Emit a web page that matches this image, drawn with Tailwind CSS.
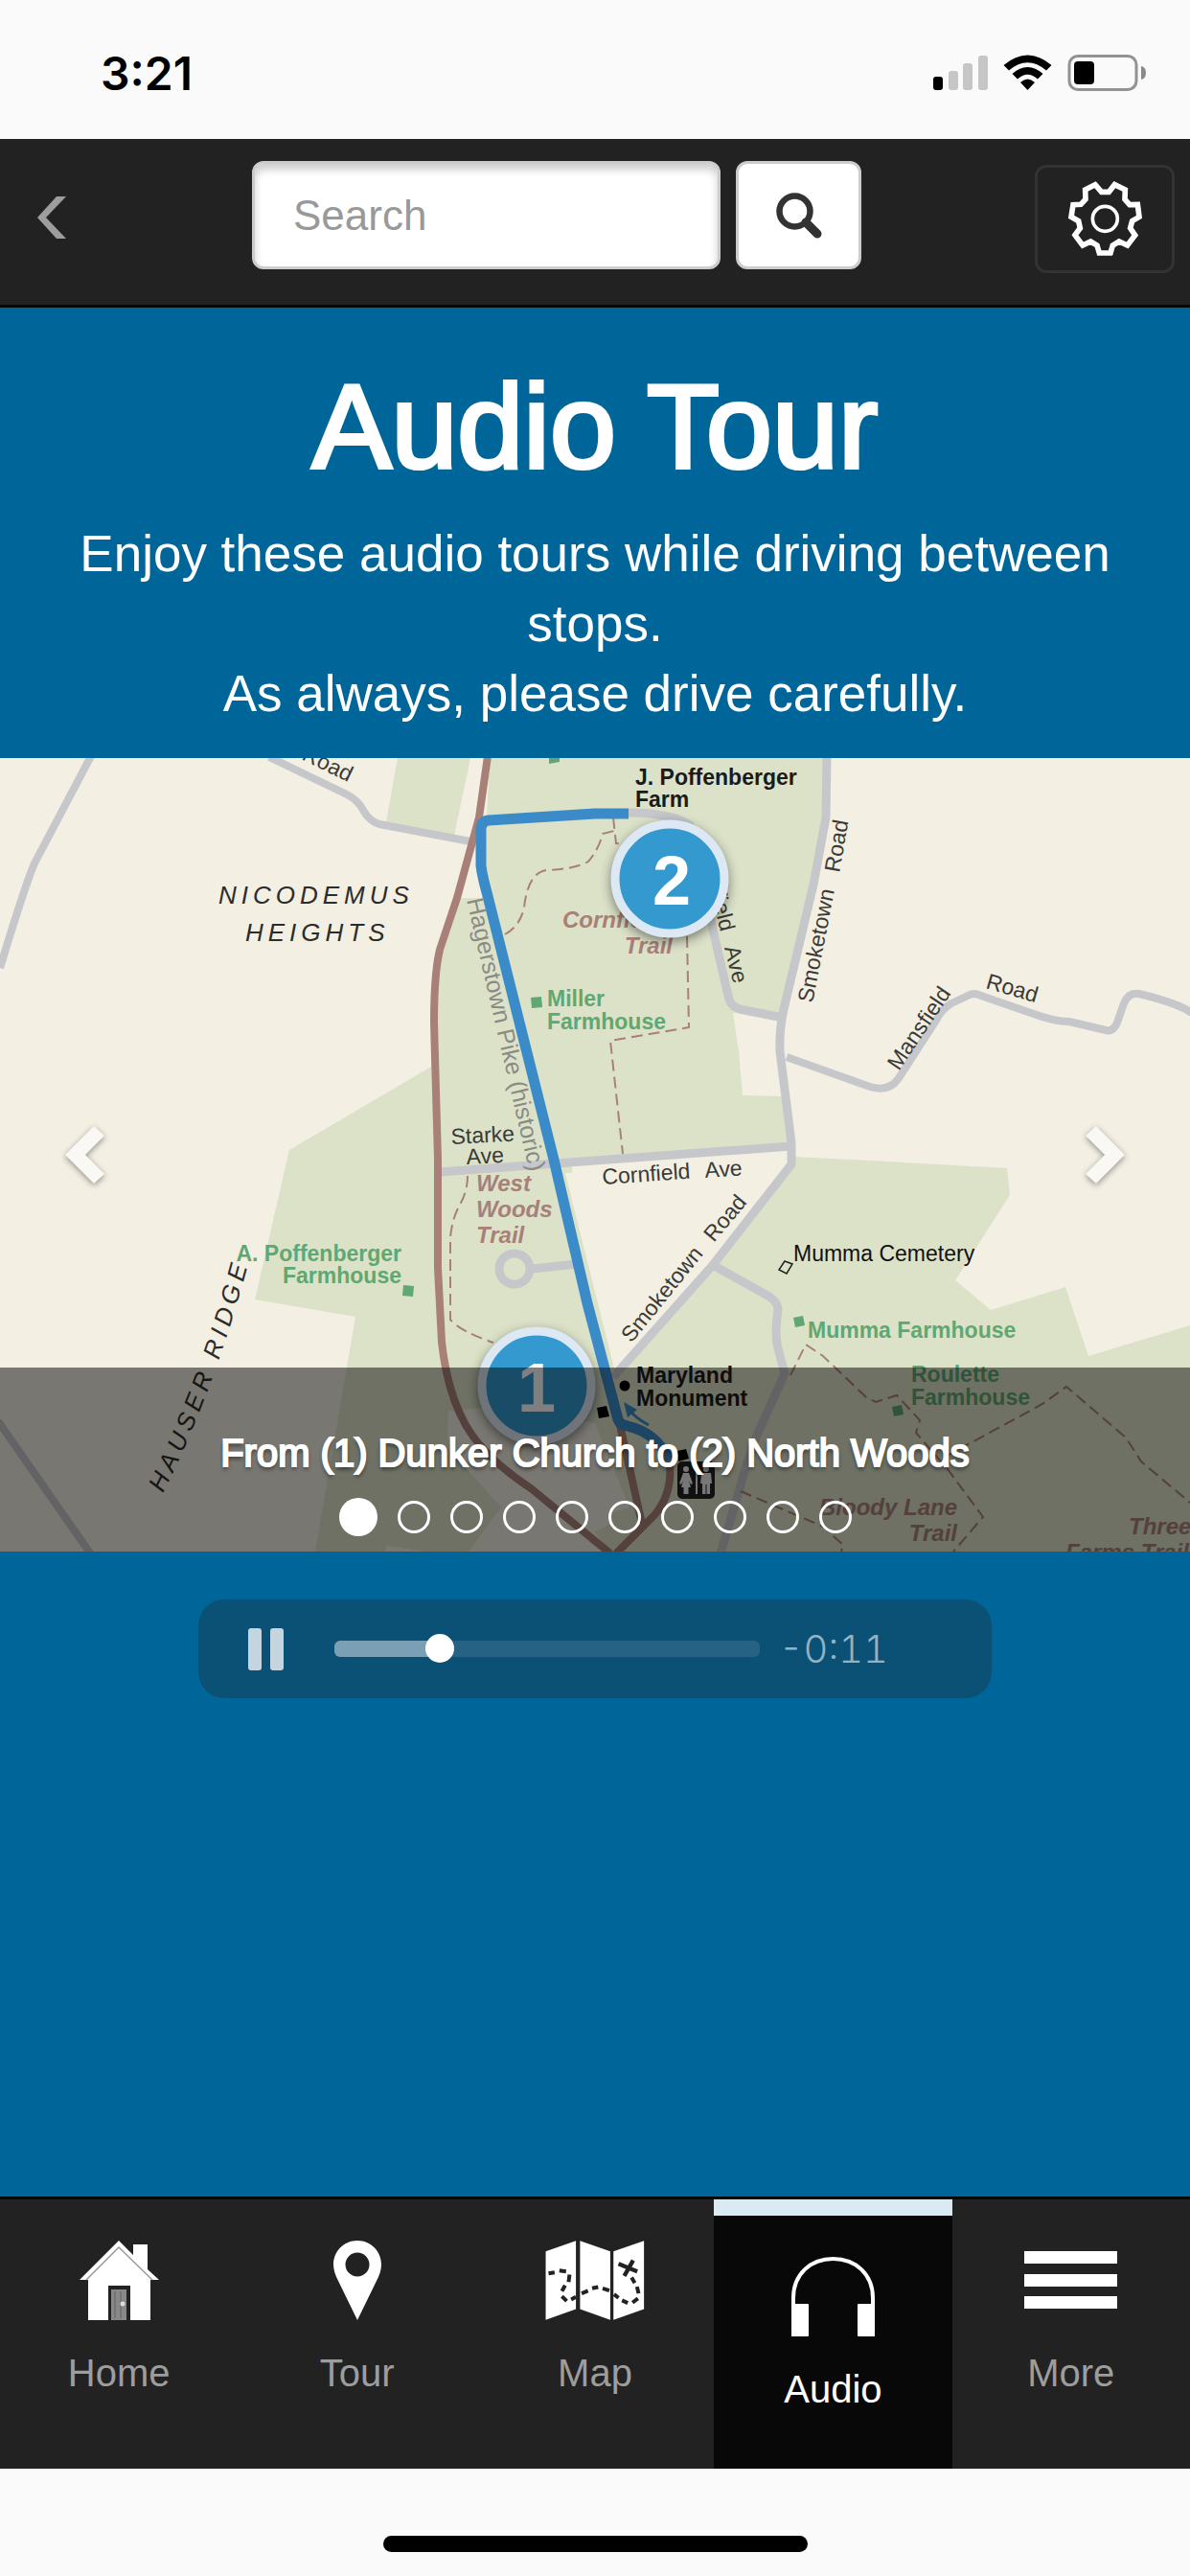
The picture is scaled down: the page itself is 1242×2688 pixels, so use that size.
<!DOCTYPE html>
<html lang="en">
<head>
    <meta charset="UTF-8">
    <meta name="viewport" content="width=device-width, initial-scale=1.0">
    <title>Audio Tour</title>
    <script src="https://cdn.jsdelivr.net/npm/@tailwindcss/browser@4"></script>
    <style>
        body {
            font-family: "Liberation Sans", Arial, sans-serif;
        }
        .seek {
            appearance: none;
            height: 30px;
            background: transparent;
        }
        .seek::-webkit-slider-runnable-track {
            height: 17px;
            border-radius: 6px;
            background: linear-gradient(to right, #7ba0b6 25%, #256283 25%);
        }
        .seek::-webkit-slider-thumb {
            appearance: none;
            width: 30px;
            height: 30px;
            margin-top: -7px;
            border-radius: 50%;
            background: #fff;
        }
        .road { fill: none; stroke: #c6c7ca; stroke-linejoin: round; }
        .pike { fill: none; stroke: #a88078; stroke-width: 8; stroke-linejoin: round; }
        .route { fill: none; stroke: #3a8bc8; stroke-width: 11; stroke-linejoin: round; }
        .trail { fill: none; stroke: #a88078; stroke-width: 2; stroke-dasharray: 12 6; }
        .area { fill: #dce2c8; }
        .field { fill: #f3efe3; }
        .road-name { font-size: 23px; fill: #3a3a38; }
        .place { font-size: 23px; font-weight: 700; }
        .trail-name { font-size: 24px; font-weight: 700; font-style: italic; fill: #a88078; }
        .region { font-size: 26px; font-style: italic; letter-spacing: 5px; fill: #2c2c2a; }
        .pin { filter: drop-shadow(0 4px 6px rgb(0 0 0 / 0.45)); }
    </style>
</head>
<body class="min-h-screen flex flex-col bg-[#fafafa]">

    <!-- Status bar -->
    <div class="h-[145px] flex items-center justify-between pt-2 pl-[105px] pr-[45px]">
        <span class="text-[48px] leading-[56px] font-semibold text-black font-[Inter,sans-serif]">3:21</span>
        <svg class="w-[223px] h-[40px]" viewBox="0 0 223 40" aria-hidden="true">
            <rect x="0" y="23" width="10" height="14" rx="3" fill="#000"/>
            <rect x="16" y="17" width="10" height="20" rx="3" fill="#c6c6c6"/>
            <rect x="31" y="9" width="10" height="28" rx="3" fill="#c6c6c6"/>
            <rect x="47" y="1" width="10" height="36" rx="3" fill="#c6c6c6"/>
            <path d="M73.500 11 Q98.500 -10 123.500 11 L118 16.500 Q98.500 0 79 16.500 Z" fill="#000"/>
            <path d="M82.500 20 Q98.500 6 114.500 20 L109 25.500 Q98.500 16 88 25.500 Z" fill="#000"/>
            <path d="M91 29 Q98.500 22 106 29 L98.500 37 Z" fill="#000"/>
            <rect x="142" y="1.500" width="70" height="35" rx="9" fill="none" stroke="#929292" stroke-width="3"/>
            <rect x="147" y="7" width="21" height="24" rx="4" fill="#000"/>
            <path d="M217 12 q5 1 5 7 q0 6 -5 7 z" fill="#8a8a8a"/>
        </svg>
    </div>

    <!-- Header -->
    <header class="bg-[#222] border-b-[3px] border-[#080808] pt-[23px] pb-[33px] pr-4">
        <div class="flex items-center h-[117px]">
            <a href="#back" aria-label="Back" class="w-[263px] pl-[38px]">
                <svg class="w-8 h-11" viewBox="0 0 32 44" aria-hidden="true">
                    <path d="M21 0 H31 L10 22 L31 44 H21 L1 22 Z" fill="#9d9d9d"/>
                </svg>
            </a>
            <form class="flex gap-4 self-start" onsubmit="return false">
                <input id="search" type="text" aria-label="Search" placeholder="Search" class="w-[489px] h-[113px] min-w-0 rounded-xl border-3 border-[#ccc] bg-white px-10 text-[44px] text-[#555] placeholder:text-[#999] shadow-[inset_0_6px_9px_rgba(0,0,0,0.2)]">
                <button type="submit" aria-label="Search" class="w-[131px] h-[113px] rounded-xl border-3 border-[#ccc] bg-white flex items-center justify-center">
                    <svg class="w-12 h-12" viewBox="0 0 48 48" aria-hidden="true">
                        <circle cx="19.500" cy="19.500" r="16" fill="none" stroke="#333" stroke-width="6.500"/>
                        <path d="M31 31 L43 43" stroke="#333" stroke-width="9" stroke-linecap="round"/>
                    </svg>
                </button>
            </form>
            <button type="button" aria-label="Settings" class="self-end ml-auto w-[146px] h-[113px] rounded-xl border-3 border-[#333] flex items-center justify-center">
                <svg class="w-[79px] h-[79px]" viewBox="525 453 237 237" fill="none" stroke="#fff" aria-hidden="true">
                    <path d="M612 464 L632 487 H655 L673 464 L706 480 L705 510 L720 527 L745 526 L750 565 L728 578 L722 600 L737 622 L713 654 L687 642 L667 654 L660 678 H625 L618 654 L598 642 L573 654 L549 622 L565 600 L560 578 L537 565 L543 527 L567 526 L582 510 L581 480 Z" stroke-width="17"/>
                    <circle cx="643" cy="571" r="39" stroke-width="11"/>
                </svg>
            </button>
        </div>
    </header>

    <main class="flex-1 bg-[#069] text-white text-center">
        <div class="px-16 pt-14 pb-[31px]">
            <h1 class="text-[124px] leading-[136px] [-webkit-text-stroke:4px_white]">Audio Tour</h1>
            <p class="mt-7 text-[53px] leading-[73px]">Enjoy these audio tours while driving between stops.<br>As always, please drive carefully.</p>
        </div>

        <!-- Map carousel -->
        <section class="relative overflow-hidden" aria-label="Audio tours">
            <svg class="block w-full h-auto bg-[#f3efe3]" viewBox="0 0 1242 828" role="img" aria-label="Map from Dunker Church to North Woods">
                <!-- Park land -->
                <path class="area" d="M415 0 H491 L474 81 L403 67 Z"/>
                <path class="area" d="M511 0 H865 L862 62 L818 268 L765 266 L771 306 L775 352 L816 353 L827 406 L597 433 V828 H329 L371 583 L266 565 L302 409 L450 322 L453 232 L481 146 H508 L500 115 V70 L508 62 Z"/>
                <path class="area" d="M828 416 L908 420 L1051 428 L1054 456 L997 545 L1034 576 L1112 552 L1136 624 L1242 592 V828 H590 V433 L642 640 L828 428 Z"/>
                <path class="field" d="M597 421 V433 L590 433 L642 640 L828 428 V406 Z"/>
                <path class="field" d="M468 681 L540 676 L621 694 L628 712 L657 782 L638 788 L636 800 L621 807 L634 828 H489 L523 782 L467 719 Z"/>
                <path class="field" d="M403 822 L447 828 H402 Z"/>

                <!-- Roads -->
                <g class="road" stroke-width="8">
                    <path d="M95 -2 L38 106 Q30 120 0 219"/>
                    <path d="M281 -1 L362 38 Q374 44 380 56 Q386 66 396 69 L491 87"/>
                    <path d="M-2 692 L95 831"/>
                    <path d="M821 312 L908 343 Q928 349 938 334 L978 272 Q983 262 993 256 L1010 248 Q1016 244 1024 248 L1076 266 Q1100 275 1116 275 L1154 284 Q1162 286 1166 276 L1173 256 Q1178 244 1189 246 Q1230 256 1244 266"/>
                </g>
                <g class="road" stroke-width="9">
                    <path d="M863 -2 L862 62 L849 132 L818 262 Q813 285 814 306 L826 402 V424 L744 529 L640 646"/>
                    <path d="M656 57 Q700 57 720 70 Q735 130 744 179 L760 248 Q762 259 772 262 L817 271"/>
                    <path d="M459 432 L621 420 L827 405"/>
                    <circle cx="537" cy="533" r="16"/>
                    <path d="M555 533 L602 528"/>
                    <path d="M744 529 L803 562 Q812 568 812 576 Q808 600 812 616 L819 642 L789 709 Q779 735 773 759 L752 830"/>
                </g>

                <!-- Trails -->
                <g class="trail">
                    <path d="M527 184 Q543 175 547 156 Q551 120 570 117 Q600 116 614 108 Q625 95 629 79 L641 76"/>
                    <path d="M640 62 L643 89 L651 90"/>
                    <path d="M717 186 L719 281 L637 295 L650 413"/>
                    <path d="M488 436 Q488 452 480 466 Q472 480 470 500 L470 586 Q480 598 515 610"/>
                    <path d="M825 644 L841 612 L859 624 L904 667 L914 672 L936 665 L960 691 L956 704 L989 742 L1026 792 L995 828"/>
                    <path d="M985 730 L1088 674 L1113 656 L1175 709 L1191 734 L1242 777"/>
                    <path d="M773 765 L859 802 L880 821 L878 828"/>
                </g>

                <!-- Hagerstown Pike and the driving route -->
                <g class="pike">
                    <path d="M509 -2 L500 62 L477 146 L459 200 Q453 225 453 276 L457 419 V532 L461 609 Q466 655 481 686 Q498 725 554 762 L637 830"/>
                    <path d="M647 696 L670 799"/>
                    <path d="M698 730 Q704 765 683 790 L643 830"/>
                </g>
                <path class="route" d="M656 58 H621 L510 65 Q502 66 502 74 V112 Q503 122 508 140 L578 419 L613 569 L645 690 Q647 696 655 697 Q685 704 698 732"/>
                <path d="M677 696 Q662 688 657 680" fill="none" stroke="#3a8bc8" stroke-width="3"/>
                <path d="M651 672 L665 680 L655 688 Z" fill="#3a8bc8"/>

                <!-- Road names -->
                <g class="road-name">
                    <text transform="translate(314 1) rotate(26)">Road</text>
                    <text transform="translate(742 141) rotate(76)">field</text>
                    <text transform="translate(756 198) rotate(76)">Ave</text>
                    <text transform="translate(848 256) rotate(-79)">Smoketown</text>
                    <text transform="translate(876 120) rotate(-80)">Road</text>
                    <text transform="translate(938 327) rotate(-56)">Mansfield</text>
                    <text transform="translate(1028 240) rotate(16)">Road</text>
                    <text transform="translate(471 403) rotate(-3)">Starke</text>
                    <text transform="translate(487 424) rotate(-3)">Ave</text>
                    <text transform="translate(629 445) rotate(-4)">Cornfield</text>
                    <text transform="translate(736 438) rotate(-4)">Ave</text>
                    <text transform="translate(659 611) rotate(-51)">Smoketown</text>
                    <text transform="translate(745 506) rotate(-50)">Road</text>
                    <text x="828" y="525" fill="#111">Mumma Cemetery</text>
                </g>
                <text transform="translate(487 148) rotate(77)" font-size="25" fill="#8a8b86">Hagerstown Pike (historic)</text>

                <!-- Region names -->
                <path id="ridge" d="M170 767 Q222 664 257 535" fill="none"/>
                <g class="region">
                    <text x="228" y="152">NICODEMUS</text>
                    <text x="256" y="191">HEIGHTS</text>
                    <text><textPath href="#ridge">HAUSER RIDGE</textPath></text>
                </g>

                <!-- Places -->
                <g class="place" fill="#1a1a1a">
                    <text x="663" y="28">J. Poffenberger</text>
                    <text x="663" y="51">Farm</text>
                    <text x="664" y="652">Maryland</text>
                    <text x="664" y="676">Monument</text>
                </g>
                <g class="place" fill="#5fa873">
                    <text x="571" y="259">Miller</text>
                    <text x="571" y="283">Farmhouse</text>
                    <text x="419" y="525" text-anchor="end">A. Poffenberger</text>
                    <text x="419" y="548" text-anchor="end">Farmhouse</text>
                    <text x="843" y="605">Mumma Farmhouse</text>
                    <text x="951" y="651">Roulette</text>
                    <text x="951" y="675">Farmhouse</text>
                </g>
                <g class="trail-name">
                    <text x="587" y="177">Cornfield</text>
                    <text x="702" y="204" text-anchor="end">Trail</text>
                    <text x="497" y="452">West</text>
                    <text x="497" y="479">Woods</text>
                    <text x="497" y="506">Trail</text>
                    <text x="999" y="790" text-anchor="end">Bloody Lane</text>
                    <text x="999" y="817" text-anchor="end">Trail</text>
                    <text x="1178" y="810">Three</text>
                    <text x="1112" y="837">Farms Trail</text>
                </g>

                <!-- Building markers -->
                <g fill="#5fa873">
                    <path d="M573 -4 L584 -5 V4 L573 6 Z"/>
                    <path d="M554 250 L565 249 L566 260 L555 261 Z"/>
                    <path d="M421 550 L432 551 L431 562 L420 561 Z"/>
                    <path d="M828 584 L838 582 L840 592 L830 594 Z"/>
                    <path d="M931 677 L941 675 L943 685 L933 687 Z"/>
                </g>
                <g fill="#000">
                    <path d="M623 678 L633 676 L636 687 L625 689 Z"/>
                    <path d="M707 723 L716 721 L719 731 L708 734 Z"/>
                    <circle cx="652" cy="655" r="5.500"/>
                </g>
                <path d="M819 525 L827 528 L821 538 L813 534 Z" fill="none" stroke="#222" stroke-width="1.500"/>

                <!-- Restrooms -->
                <rect x="707" y="734" width="39" height="39" rx="5" fill="#222"/>
                <g fill="#eee">
                    <circle cx="716" cy="742" r="3"/>
                    <path d="M713 746 H719 L723 757 L721 758 L719 754 L721 761 H718.500 V768 H713.500 V761 H711 L713 754 L711 758 L709 757 Z"/>
                    <rect x="726" y="740" width="2" height="28"/>
                    <circle cx="737" cy="742" r="3"/>
                    <path d="M732 746 H742 L743 757 H741 V768 H737.500 V758 H736.500 V768 H733 V757 H731 Z"/>
                </g>

                <!-- Stop pins -->
                <g class="pin">
                    <circle cx="699" cy="126" r="57" fill="#3399cf" stroke="#dce9f5" stroke-width="9"/>
                    <circle cx="560" cy="655" r="57" fill="#3399cf" stroke="#dce9f5" stroke-width="9"/>
                </g>
                <g font-size="72" font-weight="700" fill="#fff" text-anchor="middle">
                    <text x="701" y="153">2</text>
                    <text x="560" y="682">1</text>
                </g>
            </svg>

            <button type="button" aria-label="Previous" class="absolute inset-y-0 left-0 w-[15%] flex items-center justify-center pr-2">
                <svg class="w-11 h-[62px] drop-shadow-[0_2px_3px_rgba(0,0,0,0.4)]" viewBox="0 0 44 62" aria-hidden="true">
                    <path d="M31 1 L42 11 L22 31 L42 51 L31 61 L1 31 Z" fill="#faf8f4"/>
                </svg>
            </button>
            <button type="button" aria-label="Next" class="absolute inset-y-0 right-0 w-[15%] flex items-center justify-center pl-2">
                <svg class="w-11 h-[62px] drop-shadow-[0_2px_3px_rgba(0,0,0,0.4)]" viewBox="0 0 44 62" aria-hidden="true">
                    <path d="M13 1 L2 11 L22 31 L2 51 L13 61 L43 31 Z" fill="#faf8f4"/>
                </svg>
            </button>

            <div class="absolute inset-x-0 bottom-0 bg-black/50 pt-16 pb-4">
                <p class="text-[40px] leading-[50px] [-webkit-text-stroke:2px_white] [text-shadow:0_3px_4px_rgba(0,0,0,0.6)]">From (1) Dunker Church to (2) North Woods</p>
                <div class="mt-[22px] flex items-center justify-center gap-[21px]">
                    <button type="button" aria-label="Tour 1" class="size-10 rounded-full bg-white"></button>
                    <button type="button" aria-label="Tour 2" class="size-[34px] rounded-full border-3 border-white"></button>
                    <button type="button" aria-label="Tour 3" class="size-[34px] rounded-full border-3 border-white"></button>
                    <button type="button" aria-label="Tour 4" class="size-[34px] rounded-full border-3 border-white"></button>
                    <button type="button" aria-label="Tour 5" class="size-[34px] rounded-full border-3 border-white"></button>
                    <button type="button" aria-label="Tour 6" class="size-[34px] rounded-full border-3 border-white"></button>
                    <button type="button" aria-label="Tour 7" class="size-[34px] rounded-full border-3 border-white"></button>
                    <button type="button" aria-label="Tour 8" class="size-[34px] rounded-full border-3 border-white"></button>
                    <button type="button" aria-label="Tour 9" class="size-[34px] rounded-full border-3 border-white"></button>
                    <button type="button" aria-label="Tour 10" class="size-[34px] rounded-full border-3 border-white"></button>
                </div>
            </div>
        </section>

        <!-- Audio player -->
        <div class="mt-[50px] mb-12 mx-auto w-2/3 h-[103px] rounded-[27px] bg-[#0b5175] flex items-center pl-[52px] pr-[108px]">
            <button type="button" aria-label="Pause">
                <svg class="w-[38px] h-11" viewBox="0 0 38 44" fill="#c4d5df" aria-hidden="true">
                    <rect x="0" y="0" width="14" height="44" rx="3"/>
                    <rect x="23" y="0" width="14" height="44" rx="3"/>
                </svg>
            </button>
            <input id="seek" type="range" aria-label="Position" min="0" max="100" value="23" class="seek flex-1 min-w-0 ml-[52px] mr-5">
            <span class="text-[40px] leading-[44px] text-[#8fb3c8] font-[Inter,sans-serif] font-light tabular-nums">-0:11</span>
        </div>
    </main>

    <!-- Tab bar -->
    <nav class="grid grid-cols-5 bg-[#222] border-t-[3px] border-[#080808] text-[40px] leading-[44px] text-[#9d9d9d]">
        <a href="#home" class="flex flex-col items-center gap-[33px] pt-[43px] pb-[61px]">
            <svg class="w-[83px] h-[83px]" viewBox="0 0 83 83" aria-hidden="true">
                <path d="M0 41 L41 0 L56 15 V4 H71 V30 L83 41 H74 V83 H9 V41 Z" fill="#fff"/>
                <path d="M7 41 L41 7 L76 41" fill="none" stroke="#999" stroke-width="1.500"/>
                <rect x="30" y="47" width="23" height="36" fill="#222"/>
                <rect x="33" y="51" width="16" height="32" fill="#888"/>
                <path d="M37 53 V81 M43 53 V81" stroke="#6e6e6e" stroke-width="1.500"/>
                <circle cx="45" cy="66" r="2.500" fill="#ddd"/>
            </svg>
            Home
        </a>
        <a href="#tour" class="flex flex-col items-center gap-[33px] pt-[43px] pb-[61px]">
            <svg class="w-[50px] h-[83px]" viewBox="0 0 50 83" aria-hidden="true">
                <path fill-rule="evenodd" d="M25 0 C39 0 50 11 50 25 C50 31 48 36 45 42 L25 83 L5 42 C2 36 0 31 0 25 C0 11 11 0 25 0 Z M25 12.500 A12.500 12.500 0 1 0 25 37.500 A12.500 12.500 0 1 0 25 12.500 Z" fill="#fff"/>
            </svg>
            Tour
        </a>
        <a href="#map" class="flex flex-col items-center gap-[33px] pt-[43px] pb-[61px]">
            <svg class="w-[104px] h-[83px]" viewBox="57 53 312 250" aria-hidden="true">
                <path d="M58 87 L153 54 V268 L58 302 Z M166 54 L261 87 V302 L166 268 Z M271 87 L367 54 V268 L271 302 Z" fill="#fff"/>
                <path d="M67 156 L86 153 M101 147 L122 150 M133 160 L130 183 M119 194 L109 212 M109 228 L124 243 M138 238 L153 230 M171 219 L191 211 M204 203 L223 199 M237 203 L258 210 M273 222 L287 233 M298 241 L316 249 M331 248 L348 235 M350 219 L345 198 M338 186 L328 169" stroke="#222" stroke-width="12" fill="none"/>
                <path d="M287 126 L346 150 M333 115 L305 164" stroke="#222" stroke-width="13"/>
            </svg>
            Map
        </a>
        <a href="#audio" aria-current="page" class="flex flex-col items-center gap-[33px] border-t-[17px] border-[#d9eaf3] bg-[#080808] text-white pt-[43px] pb-[61px]">
            <svg class="w-[87px] h-[83px]" viewBox="0 0 87 83" fill="none" aria-hidden="true">
                <path d="M2 83 V43 C2 18 20 2 43.500 2 C67 2 85 18 85 43 V83" stroke="#fff" stroke-width="4"/>
                <rect x="0" y="49" width="18" height="34" rx="1" fill="#fff"/>
                <rect x="69" y="49" width="18" height="34" rx="1" fill="#fff"/>
            </svg>
            Audio
        </a>
        <a href="#more" class="flex flex-col items-center gap-[33px] pt-[43px] pb-[61px]">
            <svg class="w-[97px] h-[83px]" viewBox="0 0 97 83" fill="#fff" aria-hidden="true">
                <rect x="0" y="11" width="97" height="13"/>
                <rect x="0" y="35" width="97" height="13"/>
                <rect x="0" y="58" width="97" height="13"/>
            </svg>
            More
        </a>
    </nav>

    <!-- Home indicator -->
    <div class="pt-[70px] pb-[25px]">
        <div class="mx-auto w-[443px] h-[17px] rounded-full bg-black"></div>
    </div>
</body>
</html>
